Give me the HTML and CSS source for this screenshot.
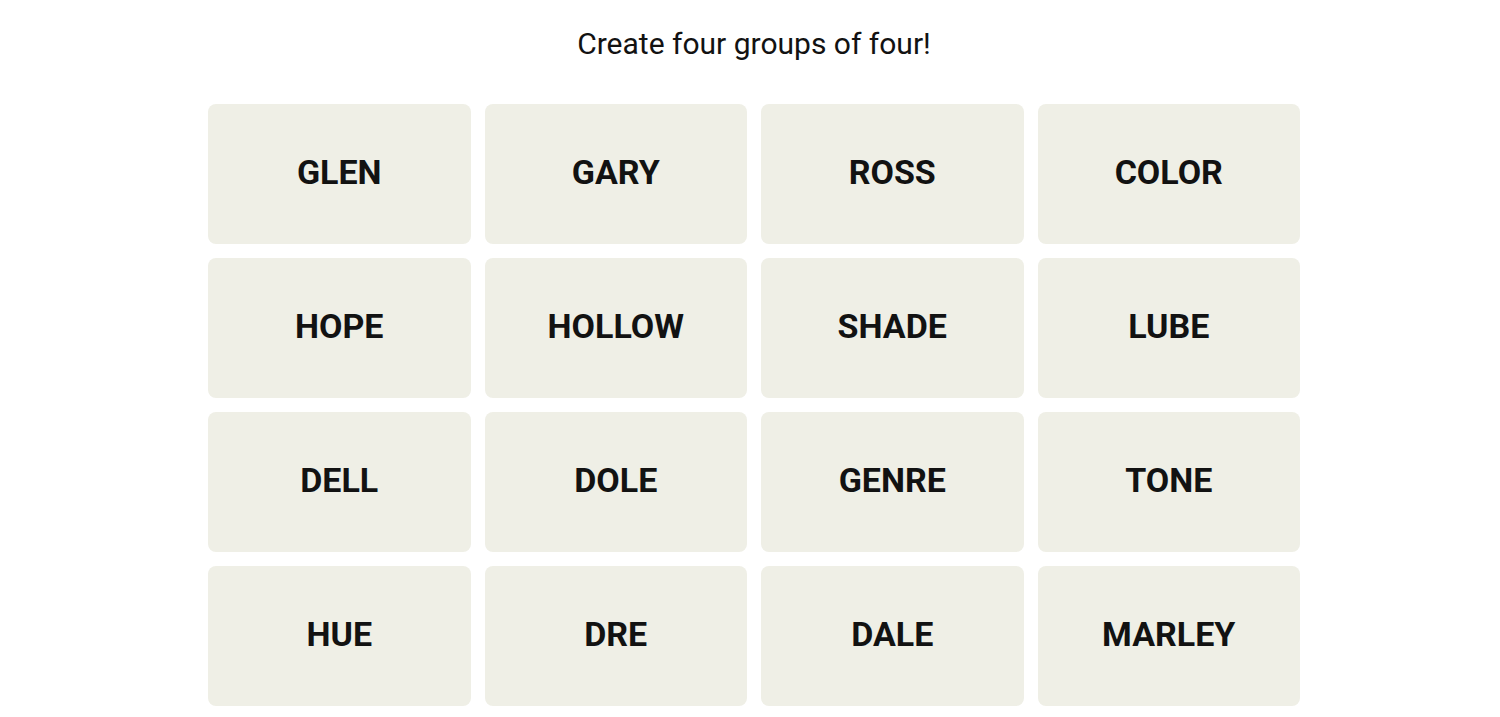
FILE: index.html
```html
<!DOCTYPE html>
<html lang="en">
    <head>
        <meta charset="UTF-8" />
        <meta name="viewport" content="width=device-width, initial-scale=1.0" />
        <title>Connections</title>
        <link rel="stylesheet" href="styles.css">
    </head>

    <body>
        <div class="board">
            <p class="prompt">Create four groups of four!</p>
            <div class="grid">
                <div class="card">GLEN</div>
                <div class="card">GARY</div>
                <div class="card">ROSS</div>
                <div class="card">COLOR</div>
                <div class="card">HOPE</div>
                <div class="card">HOLLOW</div>
                <div class="card">SHADE</div>
                <div class="card">LUBE</div>
                <div class="card">DELL</div>
                <div class="card">DOLE</div>
                <div class="card">GENRE</div>
                <div class="card">TONE</div>
                <div class="card">HUE</div>
                <div class="card">DRE</div>
                <div class="card">DALE</div>
                <div class="card">MARLEY</div>
            </div>
        </div>
    </body>
</html>
```
FILE: styles.css
```css
body {
    margin: 0;
    padding: 0 0 0 8px;
    background-color: #fff;
    font-family: Roboto, "Liberation Sans", sans-serif;
    color: #121212;
}

.board {
    width: 1092px;
    margin: 0 auto;
}

.prompt {
    margin: 0;
    padding-top: 26px;
    height: 104px;
    box-sizing: border-box;
    text-align: center;
    font-size: 30px;
    line-height: 36px;
    font-weight: 400;
}

.grid {
    display: grid;
    grid-template-columns: repeat(4, 1fr);
    grid-auto-rows: 140px;
    gap: 14px;
}

.card {
    display: flex;
    align-items: center;
    justify-content: center;
    padding-bottom: 5px;
    background-color: #efefe6;
    border-radius: 8px;
    font-size: 34px;
    font-weight: 700;
    text-transform: uppercase;
}
```
